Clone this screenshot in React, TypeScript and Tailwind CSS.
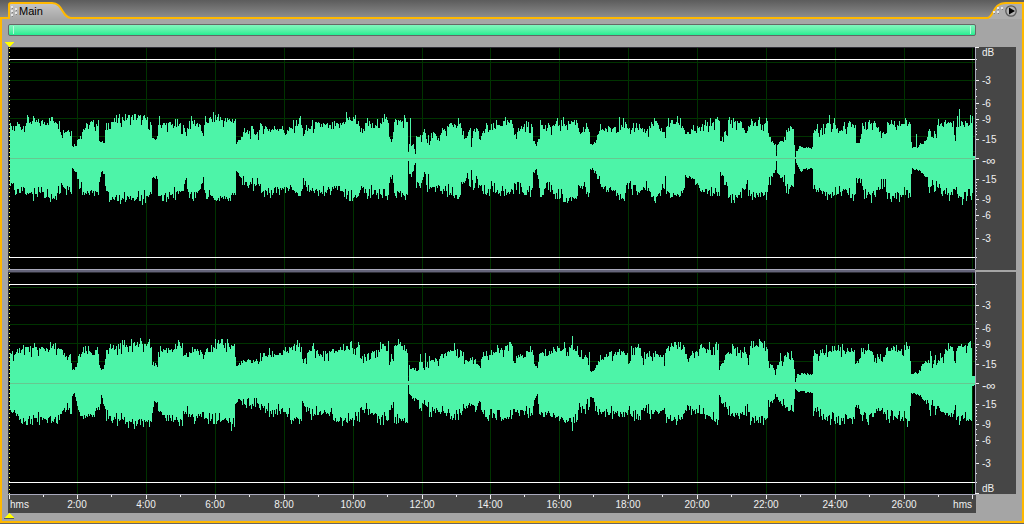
import React, { useMemo, useState } from "react";

type Point = [x: number, up: number, down: number];

// Peak envelopes: position, height above the centre line, depth below it
const LEFT: Point[] = [
	[10, 29, 27], [14, 28, 29], [16, 34, 38], [22, 31, 36], [27, 37, 38], [40, 35, 36], [50, 37, 40], [56, 38, 36],
	[60, 33, 34], [62, 27, 29], [68, 28, 31], [71, 30, 34], [72, 12, 11], [76, 14, 14], [77, 17, 20], [80, 24, 28],
	[83, 29, 36], [91, 34, 34], [98, 34, 36], [99, 19, 25], [101, 16, 14], [104, 15, 15], [105, 26, 30], [109, 36, 38],
	[116, 37, 40], [125, 40, 41], [133, 41, 41], [145, 39, 39], [151, 33, 35], [152, 18, 18], [157, 20, 20],
	[158, 33, 34], [165, 33, 38], [175, 33, 36], [182, 31, 32], [186, 25, 22], [189, 36, 38], [200, 34, 34],
	[201, 24, 24], [203, 24, 26], [205, 36, 38], [215, 40, 40], [225, 37, 41], [235, 38, 37], [236, 14, 12],
	[240, 20, 20], [243, 24, 25], [250, 26, 27], [258, 25, 27], [262, 32, 32], [270, 28, 34], [280, 31, 31],
	[285, 25, 29], [290, 28, 29], [296, 35, 38], [300, 37, 38], [303, 24, 22], [306, 27, 29], [312, 32, 33],
	[322, 33, 36], [330, 30, 31], [340, 32, 30], [345, 38, 38], [350, 39, 40], [358, 34, 38], [361, 27, 30],
	[367, 34, 35], [375, 30, 33], [378, 37, 38], [388, 38, 38], [389, 23, 24], [391, 17, 20], [393, 25, 28],
	[394, 36, 36], [406, 37, 36], [407, 37, 34], [408, 6, 3], [409, 13, 14], [410, 37, 16], [411, 13, 17],
	[413, 13, 12], [415, 4, 5], [416, 21, 27], [420, 22, 29], [424, 26, 14], [427, 14, 28], [428, 30, 15], [429, 14, 29],
	[432, 27, 31], [438, 18, 30], [445, 28, 30], [450, 33, 36], [460, 34, 38], [461, 26, 24], [466, 19, 21],
	[470, 27, 26], [471, 11, 12], [473, 26, 30], [476, 30, 20], [480, 18, 28], [486, 31, 36], [490, 27, 30],
	[500, 34, 35], [512, 35, 34], [514, 26, 26], [517, 26, 26], [520, 29, 32], [525, 33, 34], [531, 32, 36],
	[533, 18, 16], [536, 13, 12], [538, 20, 22], [540, 32, 38], [548, 29, 30], [555, 33, 38], [565, 35, 38],
	[572, 36, 40], [577, 36, 38], [579, 27, 31], [583, 27, 30], [588, 29, 35], [589, 28, 34], [590, 13, 12],
	[592, 12, 11], [595, 16, 15], [600, 30, 28], [610, 28, 32], [620, 35, 39], [625, 33, 36], [630, 21, 26],
	[632, 33, 35], [640, 31, 32], [645, 25, 28], [650, 31, 35], [655, 34, 39], [662, 28, 33], [665, 20, 25],
	[666, 34, 36], [678, 36, 37], [684, 30, 33], [685, 25, 18], [692, 26, 21], [700, 29, 30], [710, 34, 36],
	[719, 38, 38], [720, 16, 14], [724, 25, 23], [727, 23, 28], [728, 37, 39], [735, 36, 38], [742, 32, 33],
	[746, 25, 26], [750, 35, 37], [767, 34, 36], [768, 23, 28], [772, 17, 18], [775, 14, 12], [776, 2, 3],
	[777, 15, 14], [783, 18, 22], [786, 29, 29], [793, 27, 29], [795, 1, 1], [796, 7, 5], [800, 12, 14], [803, 10, 11],
	[812, 10, 10], [813, 27, 29], [820, 29, 34], [830, 34, 37], [838, 28, 36], [845, 30, 33], [850, 35, 38],
	[855, 33, 35], [856, 15, 22], [859, 15, 23], [861, 25, 28], [864, 36, 38], [875, 35, 36], [881, 27, 28],
	[886, 26, 28], [887, 35, 37], [900, 35, 38], [910, 33, 33], [911, 18, 18], [912, 10, 10], [918, 10, 12],
	[920, 14, 14], [926, 17, 18], [929, 28, 32], [932, 22, 20], [934, 24, 30], [936, 20, 24], [937, 32, 32],
	[945, 35, 36], [953, 33, 38], [955, 19, 30], [956, 33, 36], [971, 36, 38], [972, 36, 38], [973, 2, 2], [975, 2, 2],
];

const RIGHT: Point[] = [
	[10, 31, 28], [18, 27, 30], [20, 37, 38], [30, 33, 35], [45, 34, 36], [55, 36, 37], [62, 30, 30], [65, 25, 27],
	[71, 27, 28], [72, 13, 13], [74, 12, 11], [77, 20, 22], [80, 29, 30], [85, 31, 35], [95, 30, 30], [98, 30, 26],
	[99, 16, 27], [101, 13, 12], [103, 13, 20], [105, 24, 28], [106, 36, 34], [115, 35, 37], [125, 37, 37],
	[133, 39, 40], [145, 38, 38], [151, 37, 38], [152, 20, 26], [154, 18, 19], [157, 18, 20], [158, 33, 30],
	[165, 33, 34], [175, 35, 36], [182, 38, 40], [183, 24, 31], [187, 27, 30], [195, 35, 36], [203, 26, 31],
	[208, 38, 38], [220, 37, 37], [234, 38, 38], [236, 16, 18], [240, 20, 16], [243, 21, 23], [257, 22, 22],
	[265, 28, 27], [285, 30, 29], [293, 35, 36], [301, 38, 38], [302, 22, 20], [307, 27, 23], [312, 34, 33],
	[320, 28, 28], [328, 29, 29], [335, 32, 36], [345, 36, 37], [359, 35, 36], [360, 23, 24], [364, 28, 27],
	[372, 31, 30], [380, 35, 36], [388, 35, 36], [389, 21, 24], [393, 24, 26], [394, 38, 37], [402, 38, 38],
	[407, 31, 38], [408, 2, 2], [409, 16, 12], [413, 15, 17], [418, 12, 17], [420, 27, 28], [424, 14, 16],
	[425, 27, 29], [428, 15, 17], [429, 26, 28], [436, 22, 26], [445, 30, 32], [455, 34, 34], [460, 32, 33],
	[466, 22, 23], [472, 27, 20], [475, 24, 29], [480, 15, 18], [481, 26, 29], [486, 30, 32], [500, 32, 35],
	[512, 36, 34], [513, 23, 27], [520, 26, 26], [532, 32, 34], [534, 20, 15], [537, 14, 11], [539, 28, 30],
	[550, 31, 32], [557, 35, 35], [570, 34, 37], [577, 35, 38], [578, 27, 28], [585, 27, 25], [589, 25, 22],
	[590, 13, 15], [592, 11, 14], [596, 18, 25], [600, 25, 27], [610, 29, 30], [620, 31, 31], [627, 27, 31],
	[628, 20, 26], [630, 20, 25], [631, 34, 35], [640, 37, 34], [641, 25, 24], [645, 24, 24], [650, 30, 30],
	[665, 24, 28], [666, 33, 34], [675, 38, 36], [683, 36, 34], [687, 23, 24], [700, 32, 30], [710, 35, 36],
	[718, 36, 36], [719, 14, 12], [722, 22, 22], [727, 28, 28], [733, 34, 34], [742, 32, 32], [748, 25, 28],
	[749, 35, 36], [760, 38, 37], [767, 34, 35], [768, 24, 24], [772, 17, 18], [775, 9, 12], [777, 16, 14],
	[780, 27, 18], [782, 19, 22], [785, 28, 25], [793, 25, 26], [795, 1, 5], [797, 9, 8], [812, 9, 10], [813, 26, 27],
	[820, 30, 33], [835, 35, 37], [845, 32, 34], [854, 35, 35], [855, 19, 25], [858, 21, 25], [862, 31, 32],
	[870, 33, 34], [878, 24, 25], [882, 22, 25], [886, 33, 34], [900, 35, 35], [909, 34, 36], [911, 10, 10],
	[918, 10, 12], [922, 18, 15], [928, 22, 20], [930, 31, 30], [932, 17, 18], [935, 29, 30], [936, 18, 24],
	[945, 30, 32], [950, 36, 33], [953, 35, 30], [954, 20, 24], [956, 35, 33], [970, 38, 38], [971, 38, 38],
	[972, 7, 3], [975, 6, 2],
];

// Single tall peaks
const LEFT_SPIKES: Point[] = [
	[28, 41, 36], [51, 41, 36], [132, 43, 40], [142, 38, 47], [159, 42, 38], [218, 44, 40], [300, 42, 38], [346, 46, 41],
	[355, 43, 37], [404, 43, 38], [540, 38, 39], [568, 37, 43], [619, 41, 42], [654, 40, 43], [680, 40, 38],
	[717, 41, 38], [729, 41, 39], [731, 38, 45], [752, 37, 42], [829, 43, 37], [871, 35, 45], [891, 38, 44],
	[788, 30, 36], [834, 40, 37], [916, 24, 11], [957, 42, 36], [959, 49, 38], [962, 36, 47], [970, 43, 38],
];
const RIGHT_SPIKES: Point[] = [
	[32, 35, 42], [122, 43, 36], [131, 44, 39], [179, 41, 43], [218, 43, 37], [227, 44, 38], [231, 38, 48], [313, 40, 33],
	[350, 41, 36], [388, 42, 37], [509, 41, 34], [572, 47, 48], [675, 41, 36], [716, 41, 36], [751, 42, 38],
	[840, 36, 42], [868, 39, 42], [906, 41, 36], [907, 37, 44], [948, 40, 33], [959, 37, 42], [968, 40, 38],
];

const MID = 111;
const GRID_X = [77, 146, 215, 284, 353, 422, 490, 559, 628, 697, 766, 835, 904, 972];
const GRID_Y = [15, 33, 52, 71, 89, 104];

const noise = (n: number) => {
	const v = Math.sin(n * 12.9898) * 43758.5453;
	return v - Math.floor(v);
};

const buildPath = (points: Point[], spikes: Point[], seed: number) => {
	const cols: Point[] = [];
	let i = 0;
	for (let x = 10; x < 975; x++) {
		while (i < points.length - 2 && points[i + 1][0] <= x) i++;
		const [x0, u0, d0] = points[i];
		const [x1, u1, d1] = points[i + 1];
		const t = Math.min(1, (x - x0) / (x1 - x0));
		const shape = (value: number, n: number) => {
			const r = noise(n);
			const loud = value > 22;
			const range = loud ? 9 : value / 4;
			// Quiet passages stay smooth, loud ones get peaks and gaps
			let extra = 0;
			if (loud && r > 0.94) extra = 2;
			if (loud && r < 0.1) extra = -3;
			return Math.max(1, Math.round(value + (r - 0.5) * range + extra));
		};
		const spike = spikes.find((s) => s[0] === x);
		cols.push(
			spike ?? [x, shape(u0 + (u1 - u0) * t, x + seed), shape(d0 + (d1 - d0) * t, x * 3 + seed + 7)],
		);
	}
	const top = cols.map(([x, up]) => `V${MID - up}H${x + 1}`).join("");
	const bottom = [...cols].reverse().map(([x, , down]) => `V${MID + down}H${x}`).join("");
	return `M10 ${MID}${top}${bottom}Z`;
};

const Waveform = ({ label, points, spikes, seed }: { label: string; points: Point[]; spikes: Point[]; seed: number }) => {
	const path = useMemo(() => buildPath(points, spikes, seed), [points, spikes, seed]);

	return (
		<svg
			viewBox="8 0 967 222"
			preserveAspectRatio="none"
			shapeRendering="crispEdges"
			role="img"
			aria-label={label}
			className="block h-[222px] w-full bg-black"
		>
			{GRID_Y.map((y) => (
				<rect key={y} x="10" y={y} width="965" height="1" fill="#003300" />
			))}
			{GRID_X.map((x) => (
				<rect key={x} x={x} y="0" width="1" height="222" fill="#003300" />
			))}
			<rect x="8" y="0" width="967" height="1" fill="#2e2e36" />
			<rect x="8" y="0" width="1" height="222" fill="#2e2e36" />
			<path d={path} fill="#4df4a8" />
			<rect x="10" y={MID} width="965" height="1" fill="#66c890" />
			<rect x="9" y="12" width="966" height="1" fill="#fff" />
			<rect x="9" y="210" width="966" height="1" fill="#fff" />
			<path d="M9.5 1V222" stroke="#ffff4d" strokeDasharray="1 3" />
		</svg>
	);
};

const DB_MARKS = [
	{ y: 33, text: "-3" },
	{ y: 56, text: "-6" },
	{ y: 72, text: "-9" },
	{ y: 92, text: "-15" },
	{ y: 132, text: "-15" },
	{ y: 152, text: "-9" },
	{ y: 168, text: "-6" },
	{ y: 191, text: "-3" },
];
const DB_MINOR = [12, 22, 42, 49, 61, 66, 75, 78, 81, 84, 87, 135, 138, 141, 144, 148, 157, 162, 173, 181, 201, 210];

const Ruler = ({ unitY }: { unitY: number }) => (
	<svg
		viewBox="0 0 41 222"
		shapeRendering="crispEdges"
		className="block h-[222px] w-[41px] bg-[#464646] text-[10px]"
		fill="#f0f0f0"
	>
		<rect width="1" height="222" fill="#a9a9bb" />
		<rect width="4" height="1" y={unitY < MID ? 0 : 221} />
		{DB_MINOR.map((y) => (
			<rect key={y} x="1" y={y} width="1" height="1" />
		))}
		{DB_MARKS.map(({ y, text }) => (
			<g key={y}>
				<rect x="1" y={y} width="3" height="1" />
				<text x="7" y={y + 4}>{text}</text>
			</g>
		))}
		<rect x="1" y={MID} width="3" height="1" />
		<text x="7" y={MID + 7} className="text-[13px]">-∞</text>
		<text x="7" y={unitY}>dB</text>
	</svg>
);

const pct = (x: number) => `${((x - 8) / 968) * 100}%`;

const Timeline = () => (
	<svg shapeRendering="crispEdges" className="block h-[19px] w-full bg-[#464646] text-[10px]" fill="#f0f0f0">
		<rect width="100%" height="1" fill="#a9a9bb" />
		{[9, ...GRID_X].map((x) => (
			<g key={x}>
				<rect x={pct(x)} y="1" width="1" height="4" />
				{x < 972 && <rect x={pct(x + 34)} y="1" width="1" height="2" />}
			</g>
		))}
		<text x={pct(10)} y="14">hms</text>
		{GRID_X.slice(0, -1).map((x, i) => (
			<text key={x} x={pct(x)} y="14" textAnchor="middle">
				{(i + 1) * 2}:00
			</text>
		))}
		<text x={pct(972)} y="14" textAnchor="end">hms</text>
	</svg>
);

// Embossed dots of the drag handle
const Grip = ({ dots }: { dots: [number, number][] }) => (
	<g shapeRendering="crispEdges">
		{dots.map(([x, y]) => (
			<g key={`${x}-${y}`}>
				<rect x={x} y={y} width="2" height="2" fill="#e6e6e6" />
				<path d={`M${x + 2} ${y + 1}V${y + 3}H${x + 1}V${y + 2}H${x + 2}Z`} fill="#808080" />
			</g>
		))}
	</g>
);

const Header = ({ onMenu }: { onMenu: () => void }) => (
	<header className="flex h-[19px] bg-linear-to-b from-[#5c5c5c] to-[#929292]">
		<div className="relative h-[19px] w-[72px]">
			<svg viewBox="0 0 72 19" className="absolute inset-0 h-full w-full">
				<defs>
					<linearGradient id="tab" x1="0" y1="0" x2="0" y2="1">
						<stop offset="0" stopColor="#c6c6c6" />
						<stop offset="1" stopColor="#a6a6a6" />
					</linearGradient>
				</defs>
				<path d="M9 19V5Q9 3 11 3H52C63 3 62 18 71 18L72 19Z" fill="url(#tab)" />
				<path d="M0 18H9V5Q9 3 11 3H52C63 3 62 18 71 18H72" fill="none" stroke="#ffb800" strokeWidth="2" />
				<Grip dots={[[11, 6], [11, 10], [11, 14], [15, 8], [15, 12]]} />
			</svg>
			<button type="button" className="relative ml-[19px] block pt-1 text-[11px] leading-[14px] text-black">
				Main
			</button>
		</div>
		<div className="flex-1 border-b-2 border-[#ffb800]" />
		<div className="relative h-[19px] w-[40px]">
			<svg viewBox="0 0 40 19" className="absolute inset-0 h-full w-full">
				<path d="M3 19C10 17 9 3 22 3H40V19Z" fill="#aeaeae" />
				<path d="M0 18H3C10 18 8 3 22 3H39V19" fill="none" stroke="#ffb800" strokeWidth="2" />
				<Grip dots={[[13, 7], [17, 7], [9, 11], [13, 11]]} />
			</svg>
			<button type="button" aria-label="Panel menu" onClick={onMenu} className="relative ml-[21px] block pt-[5px]">
				<svg viewBox="0 0 12 12" className="block size-3">
					<circle cx="6" cy="6" r="5.2" fill="#b4b4b4" stroke="#5a5a5a" strokeWidth="1.3" />
					<path d="M4 2.6V9.4L10 6Z" fill="#000" />
				</svg>
			</button>
		</div>
	</header>
);

const App: React.FC = () => {
	const [, setMenuOpen] = useState(false);

	return (
		<div className="bg-[#666] pb-px font-['Liberation_Sans',Arial,sans-serif]">
			<Header onMenu={() => setMenuOpen((open) => !open)} />
			<main className="border-x-2 border-b-2 border-[#ffb800] bg-[#a5a5a5] px-1.5 pb-0.5 pt-[5px]">
				{/* Zoom range */}
				<div className="mr-10 flex h-3 justify-between rounded-xs border border-[#666] bg-linear-to-b from-[#80f5be] to-[#1eee92] px-1 py-px">
					<span className="w-px bg-[#b5fbd9]" />
					<span className="w-px bg-[#b5fbd9]" />
				</div>

				<svg viewBox="0 0 10 5" shapeRendering="crispEdges" className="-ml-1 mt-1.5 block h-[5px] w-2.5">
					<path d="M0 0H10L5 5Z" fill="#ffff00" />
				</svg>

				<div className="flex">
					<div className="min-w-0 flex-1">
						<Waveform label="Left channel" points={LEFT} spikes={LEFT_SPIKES} seed={3} />
						<div className="h-[3px] border-t border-[#a9a9bb] bg-[#65657a]" />
						<Waveform label="Right channel" points={RIGHT} spikes={RIGHT_SPIKES} seed={411} />
					</div>
					<div>
						<Ruler unitY={9} />
						<div className="h-[3px] border-t border-[#464646] bg-[#a5a5a5]" />
						<Ruler unitY={220} />
					</div>
				</div>
				<div className="mr-10">
					<Timeline />
				</div>

				<svg viewBox="0 0 10 6" shapeRendering="crispEdges" className="-ml-1 block h-1.5 w-2.5">
					<path d="M0 5H10L5 0Z" fill="#ffff00" />
					<path d="M0 5H10V6H0Z" fill="#555" />
				</svg>
			</main>
		</div>
	);
};

export default App;
